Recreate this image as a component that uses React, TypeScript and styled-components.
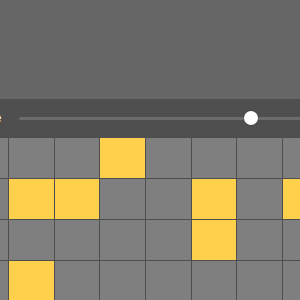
import React from "react";
import styled, { createGlobalStyle } from "styled-components";

const GlobalStyle = createGlobalStyle`
  html, body {
    margin: 0;
    padding: 0;
    background: #666666;
    font-family: "Liberation Sans", Arial, sans-serif;
  }
`;

const Viewport = styled.div`
  width: 300px;
  height: 300px;
  overflow: hidden;
  background: #666666;
`;

const Content = styled.div`
  width: 380px;
  margin-left: -36.67px;
  display: flex;
  flex-direction: column;
`;

const Header = styled.div`
  height: 99px;
  background: #666666;
`;

const Toolbar = styled.div`
  height: 38px;
  background: #4f4f4f;
  display: flex;
  align-items: center;
  gap: 18px;
  padding-left: 4px;
`;

const Label = styled.span`
  width: 34px;
  text-align: right;
  color: #ffffff;
  font-size: 12px;
  line-height: 1;
`;

const Track = styled.div`
  position: relative;
  flex: 1;
  height: 3px;
  background: #6c6c6c;
  border-radius: 2px;
`;

const Thumb = styled.div`
  position: absolute;
  top: 50%;
  width: 14px;
  height: 14px;
  border-radius: 50%;
  background: #ffffff;
  transform: translate(-50%, -50%);
  box-shadow: 0 0 2px rgba(0, 0, 0, 0.35);
`;

const Grid = styled.div<{ $cols: number }>`
  display: grid;
  grid-template-columns: repeat(${(p) => p.$cols}, 44.67px);
  grid-auto-rows: 40px;
  gap: 1px;
  padding: 1px 0;
  background: #4e4e4e;
`;

const Cell = styled.div<{ $on: boolean }>`
  background: ${(p) => (p.$on ? "#ffd04b" : "#7f7f7f")};
`;

const pattern = [
  [0, 0, 0, 1, 0, 0, 0, 0],
  [0, 1, 1, 0, 0, 1, 0, 1],
  [0, 0, 0, 0, 0, 1, 0, 0],
  [0, 1, 0, 0, 0, 0, 0, 0],
];

export default function App() {
  const value = 0.715;

  return (
    <>
      <GlobalStyle />
      <Viewport>
        <Content>
          <Header />
          <Toolbar>
            <Label>Rate</Label>
            <Track>
              <Thumb style={{ left: `${value * 100}%` }} />
            </Track>
          </Toolbar>
          <Grid $cols={8}>
            {pattern.map((row, r) =>
              row.map((on, c) => <Cell key={`${r}-${c}`} $on={on === 1} />)
            )}
          </Grid>
        </Content>
      </Viewport>
    </>
  );
}
